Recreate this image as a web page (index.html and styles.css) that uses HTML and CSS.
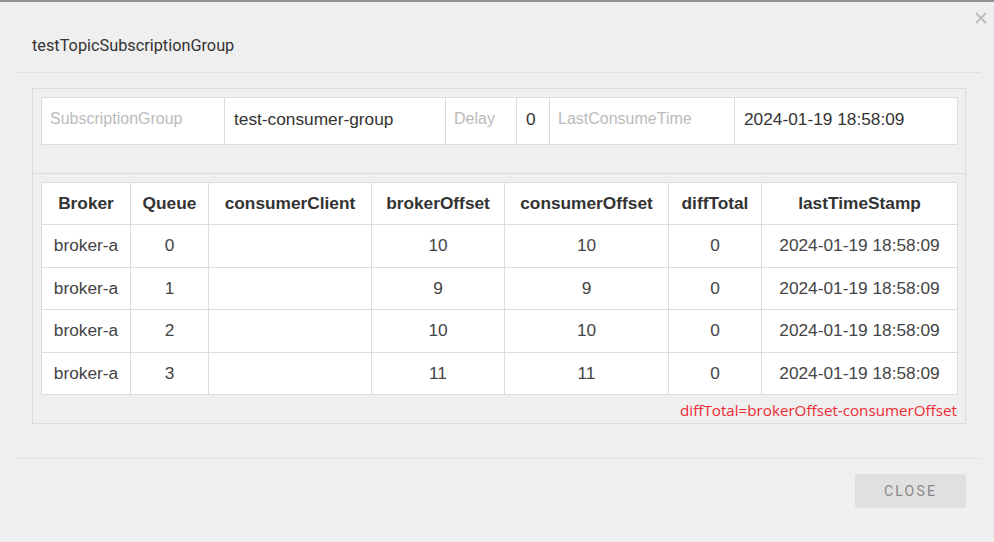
FILE: index.html
```html
<!DOCTYPE html>
<html>
<head>
<meta charset="utf-8">
<link rel="stylesheet" href="styles.css">
</head>
<body>
<div class="modal">
  <div class="modal-header">
    <div class="modal-title">testTopicSubscriptionGroup</div>
    <span class="modal-close"><svg width="12" height="12" viewBox="0 0 12 12"><path d="M1 1L11 11M11 1L1 11" stroke="#bdbdbd" stroke-width="2" fill="none"/></svg></span>
  </div>
  <div class="modal-body">
    <div class="panel">
      <div class="panel-top">
        <table class="info">
          <colgroup>
            <col style="width:183px"><col style="width:221px"><col style="width:71px"><col style="width:33px"><col style="width:185px"><col style="width:223px">
          </colgroup>
          <tr>
            <td class="label">SubscriptionGroup</td>
            <td class="value">test-consumer-group</td>
            <td class="label">Delay</td>
            <td class="value">0</td>
            <td class="label">LastConsumeTime</td>
            <td class="value">2024-01-19 18:58:09</td>
          </tr>
        </table>
      </div>
      <div class="panel-bottom">
        <table class="grid">
          <colgroup>
            <col style="width:89px"><col style="width:78px"><col style="width:163px"><col style="width:133px"><col style="width:164px"><col style="width:93px"><col style="width:196px">
          </colgroup>
          <thead>
            <tr><th>Broker</th><th>Queue</th><th>consumerClient</th><th>brokerOffset</th><th>consumerOffset</th><th>diffTotal</th><th>lastTimeStamp</th></tr>
          </thead>
          <tbody>
            <tr><td>broker-a</td><td>0</td><td></td><td>10</td><td>10</td><td>0</td><td>2024-01-19 18:58:09</td></tr>
            <tr><td>broker-a</td><td>1</td><td></td><td>9</td><td>9</td><td>0</td><td>2024-01-19 18:58:09</td></tr>
            <tr><td>broker-a</td><td>2</td><td></td><td>10</td><td>10</td><td>0</td><td>2024-01-19 18:58:09</td></tr>
            <tr><td>broker-a</td><td>3</td><td></td><td>11</td><td>11</td><td>0</td><td>2024-01-19 18:58:09</td></tr>
          </tbody>
        </table>
        <div class="note">diffTotal=brokerOffset-consumerOffset</div>
      </div>
    </div>
  </div>
  <div class="modal-footer">
    <button class="btn-close">CLOSE</button>
  </div>
</div>
</body>
</html>
```
FILE: styles.css
```css
html, body {
  margin: 0;
  padding: 0;
  background: #efefef;
}
body {
  font-family: "Liberation Sans", Arial, sans-serif;
  width: 994px;
  height: 542px;
  overflow: hidden;
}
.modal {
  border-top: 2px solid #8f8f8f;
  height: 540px;
  background: #efefef;
}
.modal-header {
  position: relative;
  margin: 0 13px 0 17px;
  height: 70px;
  border-bottom: 1px solid #e0e0e0;
}
.modal-title {
  font-family: Roboto, "Liberation Sans", sans-serif;
  font-size: 16.3px;
  color: #333;
  padding: 35px 0 0 15px;
  line-height: 18px;
}
.modal-close {
  position: absolute;
  right: -6px;
  top: 10px;
  width: 12px;
  height: 12px;
  display: block;
}
.modal-close svg {
  display: block;
}
.modal-body {
  padding: 15px 28px 34px 32px;
}
.panel {
  border: 1px solid #dcdcdc;
}
.panel-top {
  padding: 8px 8px 28px;
  border-bottom: 1px solid #dcdcdc;
}
.panel-bottom {
  padding: 8px 8px 0;
}
table {
  border-collapse: collapse;
  table-layout: fixed;
  width: 916px;
  background: #fff;
}
.info td {
  border: 1px solid #dcdcdc;
  height: 42px;
  padding: 0 8px 4px;
  white-space: nowrap;
  overflow: hidden;
}
.info .label {
  color: #bbb;
  font-size: 16px;
}
.info .value {
  color: #333;
  font-size: 17.3px;
  padding-left: 9px;
}
.grid th, .grid td {
  border: 1px solid #dcdcdc;
  padding: 0;
  text-align: center;
  color: #333;
  white-space: nowrap;
}
.grid th {
  height: 41px;
  font-weight: bold;
  font-size: 17.3px;
}
.grid td {
  height: 41.5px;
  font-size: 17.3px;
  color: #444;
}
.note {
  text-align: right;
  color: #ee2b33;
  font-family: "Open Sans", "Noto Sans", sans-serif;
  font-size: 15.2px;
  line-height: 20px;
  padding: 5px 0 3px;
}
.modal-footer {
  margin: 0 13px 0 17px;
  border-top: 1px solid #e0e0e0;
  padding-top: 15px;
  display: flex;
  justify-content: flex-end;
  padding-right: 15px;
}
.btn-close {
  width: 111px;
  height: 34px;
  border: none;
  border-radius: 2px;
  background: #e0e0e0;
  color: #888;
  font-family: Roboto, "Liberation Sans", sans-serif;
  font-size: 14px;
  letter-spacing: 2.2px;
  padding: 0;
}
```
